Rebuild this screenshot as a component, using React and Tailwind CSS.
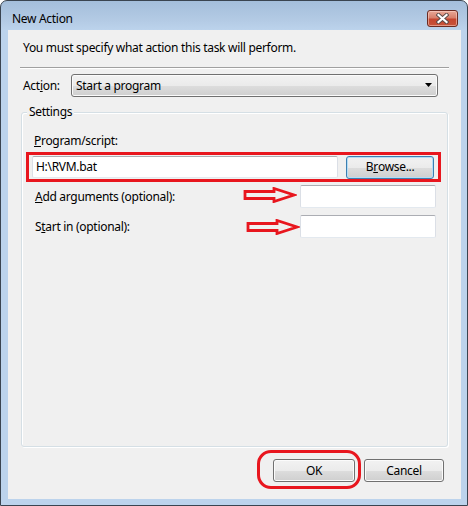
import React from 'react';

const font = { fontFamily: '"Noto Sans", "Open Sans", sans-serif' };

const Arrow = ({ className }) => (
    <svg className={className} width="54" height="16" viewBox="0 0 54 16" fill="none">
        <path d="M2 4.5 L31 4.5 L31 1.5 L51 8 L31 14.5 L31 11.5 L2 11.5 Z" stroke="#e8161e" strokeWidth="2.8" strokeLinejoin="miter" />
    </svg>
);

const TextBox = ({ className = '', children }) => (
    <div className={`h-[22px] bg-white border border-[#dbdfe6] border-t-[#abadb3] border-b-[#e3e9ef] rounded-[2px] flex items-center px-[3px] ${className}`}>
        {children}
    </div>
);

const Button = ({ className = '', focused, children }) => (
    <div
        className={`h-[23px] flex items-center justify-center rounded-[3px] border ${focused ? 'border-[#3c7fb1] shadow-[inset_0_0_0_1px_#b4ddf6]' : 'border-[#707070] shadow-[inset_0_0_0_1px_#fbfbfb]'} bg-[linear-gradient(to_bottom,#f2f2f2_0%,#ebebeb_50%,#dddddd_51%,#cfcfcf_100%)] ${className}`}
    >
        {children}
    </div>
);

const App = () => {
    return (
        <div className="w-[468px] h-[506px] bg-white text-[12px] leading-[16px] tracking-[-0.3px] text-black" style={font}>
            <div className="w-[468px] h-[506px] flex flex-col border border-[#3a4450] rounded-t-[7px] pl-[7px] pr-[6px] pb-[6px] bg-[linear-gradient(to_bottom,#a4bedb_0px,#b4cbe5_20px,#bcd3ec_29px,#bcd3ec_100%)]">
                {/* title bar */}
                <div className="h-[29px] flex justify-between items-start">
                    <span className="ml-[4px] mt-[10px] text-[#000]">New Action</span>
                    <div className="mt-[9px] mr-[3px] w-[31px] h-[17px] rounded-[3px] border border-[#6b2b22] bg-[linear-gradient(to_bottom,#e8a897_0%,#d8806c_45%,#c5462f_55%,#c7533a_100%)] shadow-[inset_0_0_0_1px_rgba(255,220,210,0.5)] flex items-center justify-center">
                        <svg width="13" height="11" viewBox="0 0 13 11">
                            <path d="M2.5 2 L10.5 9 M10.5 2 L2.5 9" stroke="#5a4a48" strokeWidth="4" strokeLinecap="square" />
                            <path d="M2.5 2 L10.5 9 M10.5 2 L2.5 9" stroke="#ffffff" strokeWidth="2.2" strokeLinecap="square" />
                        </svg>
                    </div>
                </div>

                {/* client area */}
                <div className="relative flex-1 flex flex-col bg-[#f0f0f0]">
                    <div className="pl-[15px] pt-[10px]">You must specify what action this task will perform.</div>
                    <div className="mx-[12px] mt-[11px] h-[2px] border-t border-[#a0a0a0] border-b border-b-white" />

                    <div className="mt-[5px] flex items-center">
                        <span className="ml-[15px] w-[48px]">Act<span className="underline">i</span>on:</span>
                        <div className="w-[367px] h-[23px] rounded-[3px] border border-[#707070] shadow-[inset_0_0_0_1px_#fbfbfb] bg-[linear-gradient(to_bottom,#f2f2f2_0%,#ebebeb_50%,#dddddd_51%,#cfcfcf_100%)] flex items-center pl-[4px] pr-[4px]">
                            <span className="flex-1">Start a program</span>
                            <svg width="8" height="5" viewBox="0 0 8 5"><path d="M0 0 H7 L3.5 4 Z" fill="#000" /></svg>
                        </div>
                    </div>

                    {/* settings group */}
                    <div className="relative mx-[13px] mt-[15px] flex-1 border border-[#d5dfe5] rounded-[3px] shadow-[inset_1px_1px_0_#ffffff,1px_1px_0_#ffffff]">
                        <span className="absolute left-[5px] -top-[9px] px-[2px] bg-[#f0f0f0]">Settings</span>

                        <div className="pl-[12px] pt-[20px]"><span className="underline">P</span>rogram/script:</div>
                        <div className="mt-[3px] ml-[4px] mr-[6px] h-[30px] border-[3px] border-[#e8161e] flex items-center pl-[3px] pr-[4px]">
                            <TextBox className="w-[307px]">H:\RVM.bat</TextBox>
                            <Button focused className="ml-[8px] w-[88px]">B<span className="underline">r</span>owse...</Button>
                        </div>

                        <div className="mt-[3px] flex items-center">
                            <span className="pl-[13px] flex-1"><span className="underline">A</span>dd arguments (optional):</span>
                            <TextBox className="w-[136px] mr-[11px] h-[23px]" />
                        </div>
                        <div className="mt-[7px] flex items-center">
                            <span className="pl-[13px] flex-1">S<span className="underline">t</span>art in (optional):</span>
                            <TextBox className="w-[136px] mr-[11px] h-[23px]" />
                        </div>

                        <Arrow className="absolute left-[221px] top-[74px]" />
                        <Arrow className="absolute left-[224px] top-[106px]" />
                    </div>

                    <div className="mt-[12px] mb-[17px] flex justify-end pr-[17px] gap-[9px]">
                        <Button className="w-[82px]">OK</Button>
                        <Button className="w-[80px]">Cancel</Button>
                    </div>

                    <div className="absolute left-[249px] top-[420px] w-[104px] h-[39px] border-[3px] border-[#e8161e] rounded-[14px]" />
                </div>
            </div>
        </div>
    );
};

export default App;
